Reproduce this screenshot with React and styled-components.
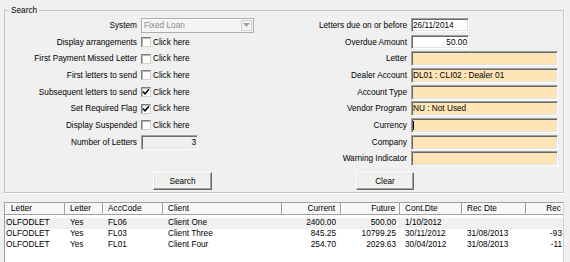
import React from 'react';
import styled, { createGlobalStyle } from 'styled-components';

const GlobalStyle = createGlobalStyle`
  html, body { margin: 0; padding: 0; background: #f0f0f0; }
  body {
    font-family: "Liberation Sans", Arial, sans-serif;
    font-size: 8.25px;
    color: #000;
  }
  * { box-sizing: border-box; }
`;

const Window = styled.div`
  width: 570px;
  height: 262px;
  overflow: hidden;
  background: #f0f0f0;
  padding-top: 5.5px;
`;

const GroupBox = styled.fieldset`
  margin: 0 6px 9px 4px;
  padding: 1.5px 4px 2px 0;
  border: 1px solid #c4c4c4;
  box-shadow: 1px 1px 0 #fff;
  min-width: 0;
`;

const Legend = styled.legend`
  margin-left: 4px;
  padding: 0 2px;
  line-height: 10px;
  background: #f0f0f0;
`;

const Columns = styled.div`
  display: flex;
`;

const FieldGrid = styled.div`
  display: grid;
  grid-template-columns: ${(p) => p.$label}px ${(p) => p.$control}px;
  grid-auto-rows: 16.7px;
  column-gap: 4px;
  align-items: center;
  margin-left: ${(p) => p.$offset || 0}px;
`;

const Label = styled.span`
  text-align: right;
  white-space: nowrap;
`;

const Combo = styled.div`
  display: flex;
  align-items: center;
  width: 113px;
  height: 15px;
  border: 1px solid #acacac;
  box-shadow: inset 1px 1px #fafafa;
  background: #f4f4f4;
  padding: 1px 1px 1px 2px;
`;

const ComboText = styled.span`
  flex: 1;
  color: #8a8a8a;
`;

const ComboButton = styled.span`
  width: 11px;
  height: 11px;
  border: 1px solid #d2d2d2;
  display: flex;
  align-items: center;
  justify-content: center;
`;

const CheckField = styled.label`
  display: flex;
  align-items: center;
  gap: 2px;
`;

const CheckBox = styled.span`
  width: 10px;
  height: 10px;
  background: #fff;
  border: 1px solid;
  border-color: #7e7e7e #d0d0d0 #d0d0d0 #7e7e7e;
  box-shadow: inset 1px 1px #b8b8b8;
  display: flex;
  align-items: center;
  justify-content: center;
`;

const TextBox = styled.div`
  width: ${(p) => p.$width}px;
  height: ${(p) => p.$height || 14}px;
  border: 1px solid;
  border-color: #a0a0a0 #fff #fff #a0a0a0;
  box-shadow: inset 1px 1px #696969, inset -1px -1px #e3e3e3;
  background: ${(p) => p.$bg || '#fff'};
  padding: 0 1px 0 1px;
  display: flex;
  align-items: center;
  justify-content: ${(p) => (p.$right ? 'flex-end' : 'flex-start')};
  white-space: nowrap;
`;

const Caret = styled.span`
  width: 1px;
  height: 9px;
  background: #000;
`;

const ButtonRow = styled.div`
  display: flex;
  gap: 144px;
  padding-left: 148px;
  margin-top: 5.2px;
`;

const Button = styled.button`
  width: ${(p) => p.$width}px;
  height: 18px;
  font: inherit;
  color: #000;
  padding: 0;
  background: #f0f0f0;
  border: 1px solid;
  border-color: #fff #696969 #696969 #fff;
  box-shadow: inset -1px -1px #a0a0a0, inset 1px 1px #e3e3e3;
`;

const ListView = styled.div`
  margin-left: 4px;
  width: 560px;
  height: 70px;
  border: 1px solid;
  border-color: #a0a0a0 #d4d4d4 #d4d4d4 #a0a0a0;
  background: #fff;
  overflow: hidden;
`;

const HeaderRow = styled.div`
  display: flex;
  height: 12px;
  background: #f7f7f7;
  border-bottom: 1px solid #a0a0a0;
`;

const HeaderCell = styled.div`
  flex: 0 0 ${(p) => p.$width}px;
  padding: 0 ${(p) => p.$pr}px 0 ${(p) => (p.$first ? 6 : 5)}px;
  text-align: ${(p) => p.$align};
  line-height: 11px;
  white-space: nowrap;
  border-right: 1px solid ${(p) => (p.$last ? 'transparent' : '#a0a0a0')};
  box-shadow: inset 1px 0 #fff;
`;

const Body = styled.div`
  padding-top: 3px;
`;

const Row = styled.div`
  display: flex;
  height: 10.7px;
  background: ${(p) => (p.$selected ? '#f0f0f0' : '#fff')};
`;

const Cell = styled.div`
  flex: 0 0 ${(p) => p.$width}px;
  padding: 0 ${(p) => p.$pr}px 0 ${(p) => (p.$first ? 1 : 5)}px;
  text-align: ${(p) => p.$align};
  line-height: 10.7px;
  white-space: nowrap;
`;

const Tick = () => (
  <svg width="8" height="8" viewBox="0 0 8 8">
    <path d="M1 3.6 L3 5.8 L7 1.2" fill="none" stroke="#000" strokeWidth="1.5" />
  </svg>
);

const Arrow = () => (
  <svg width="7" height="4" viewBox="0 0 7 4">
    <path d="M0 0 H7 L3.5 4 Z" fill="#a0a0a0" />
  </svg>
);

const checks = [
  ['Display arrangements', false],
  ['First Payment Missed Letter', false],
  ['First letters to send', false],
  ['Subsequent letters to send', true],
  ['Set Required Flag', true],
  ['Display Suspended', false],
];

const orangeFields = [
  ['Letter', ''],
  ['Dealer Account', 'DL01 : CLI02 : Dealer 01'],
  ['Account Type', ''],
  ['Vendor Program', 'NU : Not Used'],
  ['Currency', null],
  ['Company', ''],
  ['Warning Indicator', ''],
];

const columns = [
  { title: 'Letter', width: 60, align: 'left', pr: 5 },
  { title: 'Letter', width: 38, align: 'left', pr: 5 },
  { title: 'AccCode', width: 60, align: 'left', pr: 5 },
  { title: 'Client', width: 119, align: 'left', pr: 5 },
  { title: 'Current', width: 59, align: 'right', pr: 5 },
  { title: 'Future', width: 59, align: 'right', pr: 4 },
  { title: 'Cont.Dte', width: 62, align: 'left', pr: 5 },
  { title: 'Rec Dte', width: 64, align: 'left', pr: 5 },
  { title: 'Rec', width: 36, align: 'right', pr: 0 },
];

const rows = [
  ['OLFODLET', 'Yes', 'FL06', 'Client One', '2400.00', '500.00', '1/10/2012', '', ''],
  ['OLFODLET', 'Yes', 'FL03', 'Client Three', '845.25', '10799.25', '30/11/2012', '31/08/2013', '-93'],
  ['OLFODLET', 'Yes', 'FL01', 'Client Four', '254.70', '2029.63', '30/04/2012', '31/08/2013', '-11'],
];

export default function App() {
  return (
    <Window>
      <GlobalStyle />
      <GroupBox>
        <Legend>Search</Legend>
        <Columns>
          <FieldGrid $label={132} $control={116}>
            <Label>System</Label>
            <Combo>
              <ComboText>Fixed Loan</ComboText>
              <ComboButton>
                <Arrow />
              </ComboButton>
            </Combo>
            {checks.map(([label, checked]) => (
              <React.Fragment key={label}>
                <Label>{label}</Label>
                <CheckField>
                  <CheckBox>{checked && <Tick />}</CheckBox>
                  Click here
                </CheckField>
              </React.Fragment>
            ))}
            <Label>Number of Letters</Label>
            <TextBox $width={57} $height={15} $bg="#f0f0f0" $right>
              3
            </TextBox>
          </FieldGrid>
          <FieldGrid $label={107} $control={147} $offset={43}>
            <Label>Letters due on or before</Label>
            <TextBox $width={58}>26/11/2014</TextBox>
            <Label>Overdue Amount</Label>
            <TextBox $width={58} $right>
              50.00
            </TextBox>
            {orangeFields.map(([label, value]) => (
              <React.Fragment key={label}>
                <Label>{label}</Label>
                <TextBox $width={147} $height={15} $bg="#ffe4b5">
                  {value === null ? <Caret /> : value}
                </TextBox>
              </React.Fragment>
            ))}
          </FieldGrid>
        </Columns>
        <ButtonRow>
          <Button $width={59}>Search</Button>
          <Button $width={58}>Clear</Button>
        </ButtonRow>
      </GroupBox>
      <ListView>
        <HeaderRow>
          {columns.map((c, i) => (
            <HeaderCell
              key={i}
              $width={c.width}
              $align={c.align}
              $pr={c.pr}
              $first={i === 0}
              $last={i === columns.length - 1}
            >
              {c.title}
            </HeaderCell>
          ))}
        </HeaderRow>
        <Body>
          {rows.map((r, ri) => (
            <Row key={ri} $selected={ri === 0}>
              {r.map((v, ci) => (
                <Cell
                  key={ci}
                  $width={columns[ci].width}
                  $align={columns[ci].align}
                  $pr={columns[ci].pr}
                  $first={ci === 0}
                >
                  {v}
                </Cell>
              ))}
            </Row>
          ))}
        </Body>
      </ListView>
    </Window>
  );
}
